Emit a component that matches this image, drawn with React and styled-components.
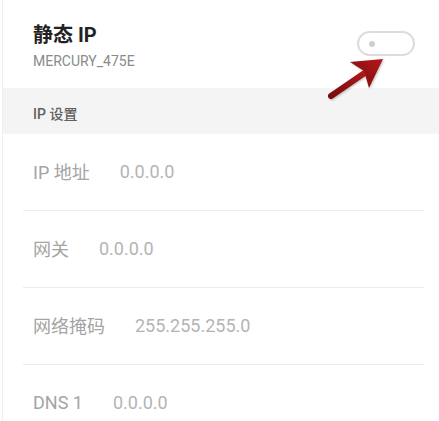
import styled, { createGlobalStyle } from "styled-components";

const GlobalStyle = createGlobalStyle`
    body {
        margin: 0;
        background: #ffffff;
        font-family: Roboto, "Noto Sans CJK SC", sans-serif;
    }
`;

const Page = styled.div`
    position: relative;
    margin-left: 2px;
    border-left: 1px solid #efefef;
    min-height: 421px;
    overflow: hidden;
`;

const Header = styled.div`
    height: 88px;
    display: flex;
    align-items: center;
    justify-content: space-between;
    padding: 0 24px 0 30px;
    box-sizing: border-box;
`;

const TitleBlock = styled.div`
    display: flex;
    flex-direction: column;
    gap: 5px;
    margin-top: 4px;
`;

const Title = styled.div`
    font-size: 20px;
    font-weight: 700;
    color: #222222;
    line-height: 24px;
`;

const Subtitle = styled.div`
    font-size: 14px;
    color: #8a8a8a;
    line-height: 18px;
`;

const Toggle = styled.div`
    width: 58px;
    height: 25px;
    box-sizing: border-box;
    border: 2px solid #dcdcdc;
    border-radius: 13px;
    display: flex;
    align-items: center;
    padding-left: 10px;
    margin-top: -1px;

    &::before {
        content: "";
        width: 6px;
        height: 6px;
        border-radius: 50%;
        background: #cfcfcf;
    }
`;

const SectionHeader = styled.div`
    height: 46px;
    background: #f4f4f4;
    display: flex;
    align-items: center;
    padding: 3px 0 0 30px;
    box-sizing: border-box;
    font-size: 14px;
    font-weight: 500;
    color: #606060;
`;

const Row = styled.div`
    height: 77px;
    margin: 0 15px 0 20px;
    padding: 0 0 2px 10px;
    box-sizing: border-box;
    display: flex;
    align-items: center;
    gap: 30px;
    font-size: 18px;
    border-bottom: ${(p) => (p.$last ? "none" : "1px solid #ececec")};
`;

const Label = styled.span`
    color: #a4a4a4;
`;

const Value = styled.span`
    color: #b4b4b4;
`;

const Arrow = styled.svg`
    position: absolute;
    left: 317px;
    top: 50px;
    filter: drop-shadow(1px 1px 1px rgba(0, 0, 0, 0.25));
`;

const fields = [
    { label: "IP 地址", value: "0.0.0.0" },
    { label: "网关", value: "0.0.0.0" },
    { label: "网络掩码", value: "255.255.255.0" },
    { label: "DNS 1", value: "0.0.0.0" },
];

export default function App() {
    return (
        <>
            <GlobalStyle />
            <Page>
                <Header>
                    <TitleBlock>
                        <Title>静态 IP</Title>
                        <Subtitle>MERCURY_475E</Subtitle>
                    </TitleBlock>
                    <Toggle />
                </Header>
                <SectionHeader>IP 设置</SectionHeader>
                {fields.map((f, i) => (
                    <Row key={f.label} $last={i === fields.length - 1}>
                        <Label>{f.label}</Label>
                        <Value>{f.value}</Value>
                    </Row>
                ))}
                <Arrow width="70" height="56" viewBox="0 0 70 56">
                    <defs>
                        <linearGradient id="red" x1="0" y1="1" x2="1" y2="0">
                            <stop offset="0" stopColor="#7a0c0c" />
                            <stop offset="1" stopColor="#b3181a" />
                        </linearGradient>
                    </defs>
                    <line
                        x1="11"
                        y1="46"
                        x2="46"
                        y2="22"
                        stroke="url(#red)"
                        strokeWidth="6"
                        strokeLinecap="round"
                    />
                    <polygon
                        points="63,9 30,12 44,21 49,38"
                        fill="url(#red)"
                    />
                </Arrow>
            </Page>
        </>
    );
}
